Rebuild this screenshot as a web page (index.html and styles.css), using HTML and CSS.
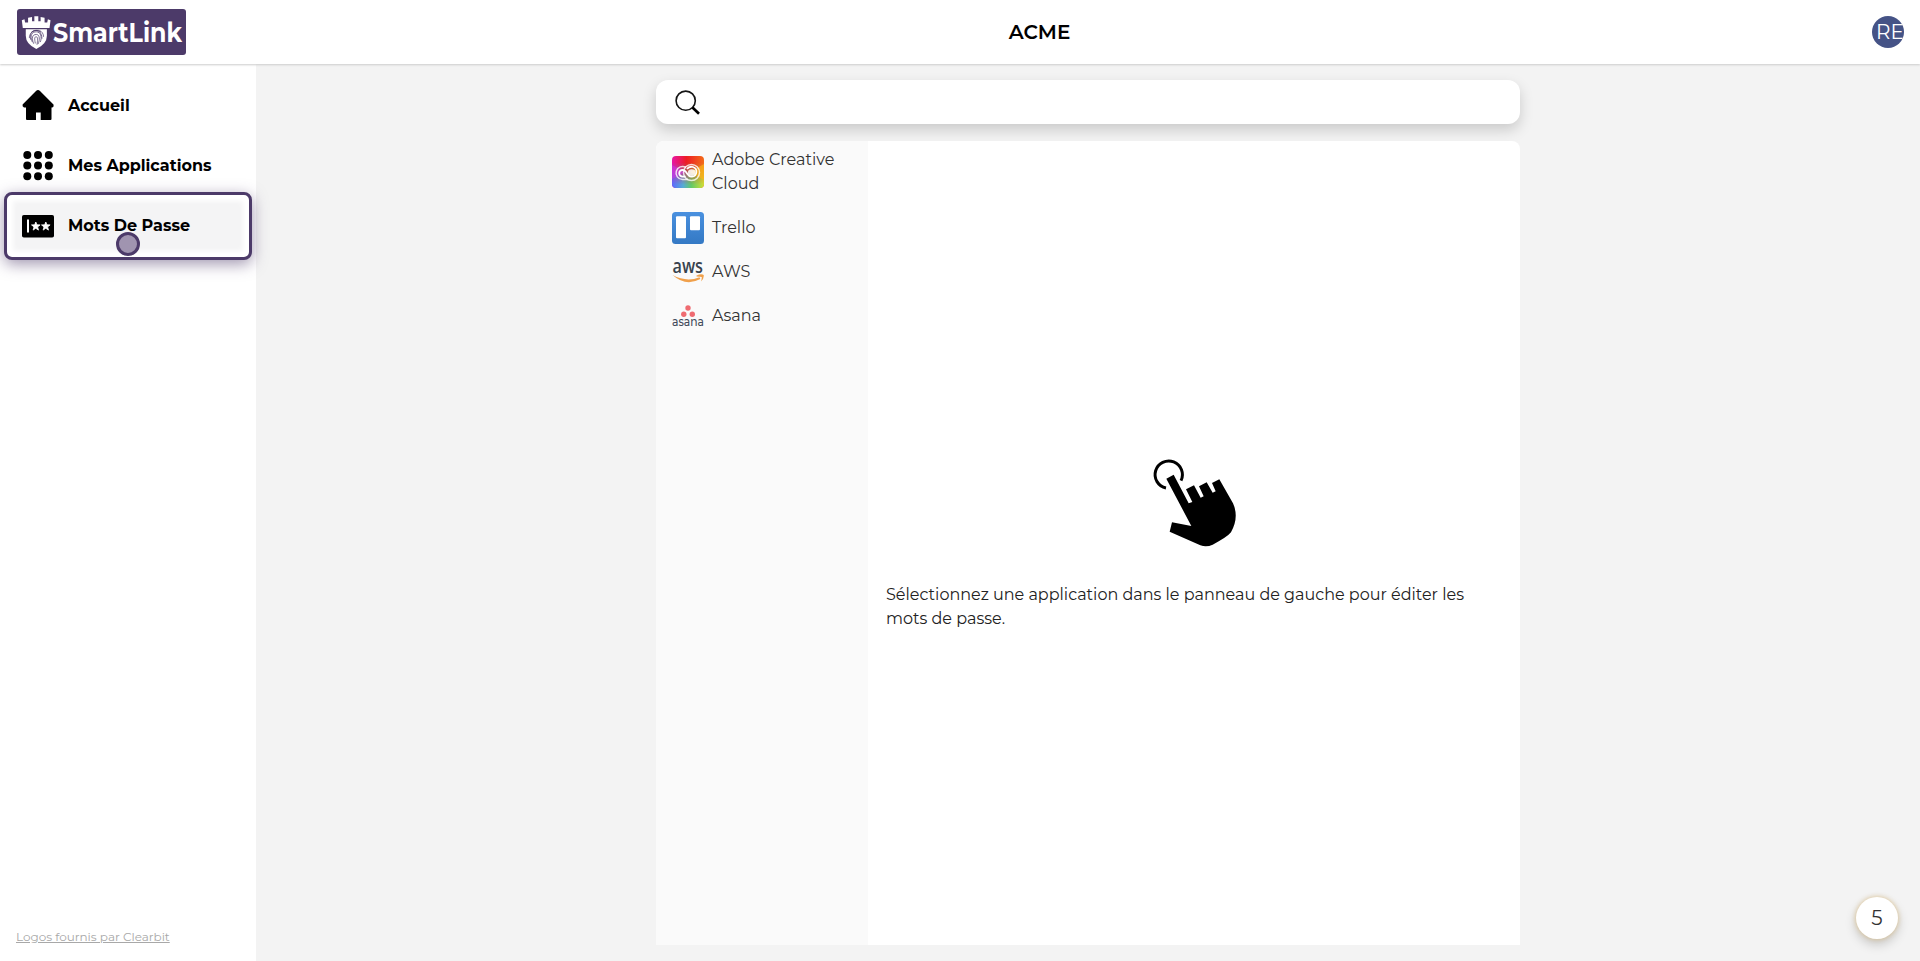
FILE: index.html
```html
<!DOCTYPE html>
<html lang="fr">
<head>
<meta charset="utf-8">
<title>SmartLink</title>
<link rel="stylesheet" href="styles.css">
</head>
<body>
<header class="topbar">
  <div class="brand">
    <svg class="brand-icon" viewBox="0 0 90 100"><g fill="#fff"><path d="M2 13l8-3 2 10h9V5l12-2v13h7V1h12v15h7V3l12 2v15h8l2-10 8 3-3 23H5z"/><path d="M14 40h64v20q0 25-32 40Q14 85 14 60z"/></g><g fill="none" stroke="#4c3a69" stroke-width="2.2"><path d="M29 72c-9-37 35-38 34-3M34 79c-9-20-1-31 12-31s18 16 12 31M38 84c-7-17-5-28 8-28 11 0 11 17 5 29M43 83c-3-15-3-20 3-20 5 0 4 12 2 24M31 49q14-10 29 0M25 67c-2-25 41-36 43-4"/></g></svg>
    <svg class="brand-name" viewBox="0 0 132 46"><text x="0" y="33" textLength="129" lengthAdjust="spacingAndGlyphs">SmartLink</text></svg>
  </div>
  <h1 class="company">ACME</h1>
  <div class="avatar">RE</div>
</header>
<div class="layout">
  <aside class="sidebar">
    <nav class="nav">
      <a class="nav-item"><svg class="nav-icon" viewBox="0 0 32 32"><path d="M16 1Q17 1 18 2L31.5 15.500Q32 18.500 30 18.500H29.5V30Q29.500 31 28.500 31H18.700V23.500H14V31H5Q4 31 4 30V18.500H2Q0 17.500 .6 15.500L14 2Q15 1 16 1z"/></svg><span class="nav-label">Accueil</span></a>
      <a class="nav-item"><svg class="nav-icon" viewBox="0 0 32 32"><g><circle cx="5.300" cy="6" r="4"/><circle cx="16" cy="6" r="4"/><circle cx="26.800" cy="6" r="4"/><circle cx="5.300" cy="16.500" r="4"/><circle cx="16" cy="16.500" r="4"/><circle cx="26.800" cy="16.500" r="4"/><circle cx="5.300" cy="27.300" r="4"/><circle cx="16" cy="27.300" r="4"/><circle cx="26.800" cy="27.300" r="4"/></g></svg><span class="nav-label">Mes Applications</span></a>
      <a class="nav-item active"><svg class="nav-icon" viewBox="0 0 32 32"><rect y="5" width="32" height="22.500" rx="1.800"/><g fill="#fff" stroke="#fff" stroke-width=".8"><path stroke="none" d="M5 9.500h2v13H5z"/><path d="M13.800 12l1.100 2.800 3.200.1-2.500 2 .9 3.200-2.700-1.800-2.700 1.800.9-3.200-2.500-2 3.200-.1zM23.800 12l1.100 2.800 3.200.1-2.500 2 .9 3.200-2.700-1.800-2.700 1.800.9-3.200-2.500-2 3.200-.1z"/></g></svg><span>Mots De Passe</span><i class="pointer"></i></a>
    </nav>
    <a class="credit">Logos fournis par Clearbit</a>
  </aside>
  <main class="content">
    <div class="search"><svg viewBox="0 0 25 25"><circle cx="10.700" cy="10.700" r="9.600" fill="none" stroke="#151515" stroke-width="1.600"/><path d="M17.500 17.500L24 23.700" stroke="#000" stroke-width="2.700"/></svg></div>
    <div class="panels">
      <ul class="apps">
        <li class="app tall">
          <svg class="app-icon" viewBox="0 0 32 32"><defs><linearGradient id="top" x2="1"><stop stop-color="#e817a5"/><stop offset=".45" stop-color="#ed1c24"/><stop offset="1" stop-color="#f36b18"/></linearGradient><linearGradient id="bottom" x2="1"><stop stop-color="#596bff"/><stop offset=".35" stop-color="#56acd4"/><stop offset=".6" stop-color="#63c968"/><stop offset="1" stop-color="#d0df35"/></linearGradient><linearGradient id="fade" x2="0" y2="1"><stop offset=".2" stop-color="#000"/><stop offset=".9" stop-color="#fff"/></linearGradient><mask id="m"><rect width="32" height="32" fill="url(#fade)"/></mask></defs><rect width="32" height="32" rx="4" fill="url(#top)"/><rect width="32" height="32" rx="4" fill="url(#bottom)" mask="url(#m)"/><path d="M32 8v16L18 16z" fill="#ffb515" opacity=".65"/><path d="M0 9v14l14-7z" fill="#d637ec" opacity=".5"/><g fill="none" stroke="#fff"><circle cx="19.500" cy="16.500" r="8" stroke-width="1.500" opacity=".8"/><path d="M16 23.500h-5.500a6.500 6.500 0 1 1 3.500-12" stroke-width="1.500" opacity=".8"/><path d="M21 20.500h-2q-2 0-4-3l-1-1.500q-1.500-2-3.500-2a3.300 3.300 0 0 0 0 6.600h3M15 13q2-3 6-2a5 5 0 0 1-1 9.700" stroke-width="1.800"/></g><ellipse cx="19.700" cy="16.500" rx="3.800" ry="3.200" fill="#fff" opacity=".85"/></svg>
          <span>Adobe Creative Cloud</span></li>
        <li class="app"><svg class="app-icon" viewBox="0 0 32 32"><defs><linearGradient id="tr" x2="0" y2="1"><stop stop-color="#4990df"/><stop offset="1" stop-color="#3479c4"/></linearGradient></defs><rect width="32" height="32" rx="3.500" fill="url(#tr)"/><rect x="4" y="4.200" width="10" height="22" rx="1" fill="#fff"/><rect x="18" y="4.200" width="10" height="14" rx="1" fill="#fff"/></svg><span>Trello</span></li>
        <li class="app"><svg class="app-icon" viewBox="0 0 32 32"><text class="aws-word" x=".5" y="16.500" textLength="30.500" lengthAdjust="spacingAndGlyphs">aws</text><path d="M.5 19q14 7.500 27 2.200l.8 1.800q-14.500 8-27.800-4zM24.500 19.500q5-2 7.200-.5.500 3.500-2.700 6.500 1-3 .7-4.500-1.200-.5-5.200-.5z" fill="#f0a04b"/></svg><span>AWS</span></li>
        <li class="app"><svg class="app-icon" viewBox="0 0 32 32"><g fill="#ef6b71"><circle cx="16" cy="8" r="2.700"/><circle cx="11.800" cy="14.200" r="2.700"/><circle cx="20.300" cy="14.200" r="2.700"/></g><text class="asana-word" x="0" y="26.300" textLength="32" lengthAdjust="spacingAndGlyphs">asana</text></svg><span>Asana</span></li>
      </ul>
      <section class="empty">
        <svg class="hand" viewBox="0 0 390 390"><path d="M108 144A41 41 0 1 1 153 122" fill="none" stroke="#000" stroke-width="9"/><path d="M109 116L131 104L176 190L187 186L168 148L192 136L212 173L221 169L207 139L230 127L248 158L257 154L246 129L268 118L309 190Q328 232 303 277Q292 291 248 314Q230 322 211 316L119 275L126 247L184 258z"/></svg>
        <p>Sélectionnez une application dans le panneau de gauche pour éditer les mots de passe.</p>
      </section>
    </div>
  </main>
</div>
<div class="counter">5</div>
</body>
</html>
```
FILE: styles.css
```css
* { box-sizing: border-box; }
body { margin: 0; height: 961px; display: flex; flex-direction: column; overflow: hidden; font: 16px/24px Montserrat, Inter, sans-serif; color: #333; background: #f3f3f3; }
.topbar { height: 64px; flex: none; display: grid; grid-template-columns: 190px 1fr 32px; align-items: center; padding: 0 16px 0 17px; background: #fff; box-shadow: 0 1px 2px #ccc; z-index: 1; }
.brand { width: 169px; height: 46px; border-radius: 3px; background: #4c3a69; display: flex; align-items: center; padding-left: 4px; gap: 2px; }
.brand-icon { width: 30px; height: 33px; flex: none; }
.brand-name { width: 132px; height: 46px; flex: none; fill: #fff; font-size: 26.5px; font-weight: 700; }
.company { margin: 0; color: #000; font-size: 20px; font-weight: 600; text-align: center; }
.avatar { width: 32px; height: 32px; border-radius: 50%; overflow: hidden; background: #455386; color: #fff; font-size: 20px; line-height: 32px; font-weight: 400; text-align: center; padding-left: 4px; white-space: nowrap; }
.layout { flex: 1; display: flex; min-height: 0; }
.sidebar { width: 256px; flex: none; display: flex; flex-direction: column; justify-content: space-between; background: #fff; padding: 11px 4px 12px; }
.nav { display: flex; flex-direction: column; }
.nav-item { height: 60px; display: flex; align-items: center; padding-left: 18px; gap: 14px; color: #000; font-weight: 700; position: relative; white-space: nowrap; }
.nav-icon { width: 32px; height: 32px; flex: none; }
.nav-label { padding-top: 1px; }
.nav-item.active { height: 68px; width: 248px; margin-top: -3px; padding-left: 15px; border: 3px solid #4c3a69; border-radius: 8px; background: #f4f4f5; box-shadow: inset 0 0 5px 6px #fff, 0 4px 15px #4c3a6988; }
.pointer { position: absolute; left: 109px; top: 37px; width: 24px; height: 24px; border: 3px solid #4c3a69; border-radius: 50%; background: #a094b0; }
.credit { padding-left: 12px; color: #a8a8a8; font-size: 12px; text-decoration: underline; }
.content { flex: 1; display: flex; flex-direction: column; align-items: flex-start; padding: 16px 0 16px 400px; }
.search, .panels { width: 864px; }
.search { height: 44px; flex: none; border-radius: 12px; background: #fff; box-shadow: 0 6px 14px #0000002b; display: flex; align-items: center; padding-left: 19px; }
.search svg { width: 25px; height: 25px; }
.panels { flex: 1; display: flex; margin-top: 17px; border-radius: 8px 8px 0 0; background: #fff; position: relative; overflow: hidden; }
.apps { width: 212px; flex: none; margin: 0; padding: 7px 16px; list-style: none; background: #fafafa; display: flex; flex-direction: column; gap: 12px; }
.app { display: flex; align-items: center; gap: 8px; height: 32px; }
.app.tall { height: 48px; margin-bottom: 4px; }
.app-icon { width: 32px; height: 32px; flex: none; }
.aws-word { font: 600 20px "Open Sans", sans-serif; fill: #38424d; }
.asana-word { font: 500 12px Montserrat, sans-serif; fill: #434b5b; }
.empty { flex: 1; display: flex; flex-direction: column; align-items: center; padding: 299px 16px 0 18px; }
.hand { width: 130px; height: 130px; flex: none; }
.empty p { width: 100%; margin: 13px 0 0; color: #222; }
.counter { position: absolute; left: 1856px; top: 897px; width: 42px; height: 42px; border-radius: 50%; background: #fff; box-shadow: 0 0 5px #dec38f, 0 5px 12px #0003; text-align: center; font-size: 20px; line-height: 42px; }
```
